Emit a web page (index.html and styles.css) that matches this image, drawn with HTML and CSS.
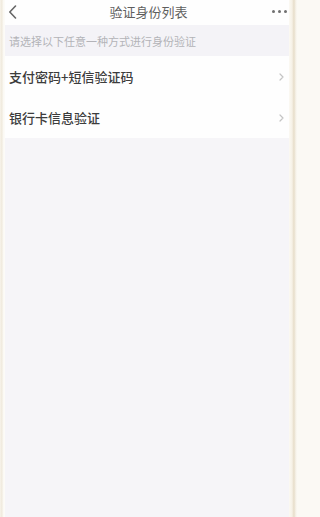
FILE: index.html
```html
<!DOCTYPE html>
<html lang="zh">
<head>
<meta charset="utf-8">
<link rel="stylesheet" href="styles.css">
</head>
<body>
<div class="frame">
  <div class="edge edge-left"></div>
  <div class="screen">
    <header class="nav">
      <svg class="back" width="9" height="14" viewBox="0 0 9 14"><path d="M7.5 1 L1.8 7 L7.5 13" fill="none" stroke="#666" stroke-width="1.6" stroke-linecap="round" stroke-linejoin="round"/></svg>
      <div class="title">验证身份列表</div>
      <div class="more"><span></span><span></span><span></span></div>
    </header>
    <div class="hint">请选择以下任意一种方式进行身份验证</div>
    <ul class="list">
      <li class="row"><span class="label">支付密码+短信验证码</span><svg class="chev" width="5" height="8" viewBox="0 0 5 8"><path d="M1 1 L4 4 L1 7" fill="none" stroke="#c4c4c4" stroke-width="1.2" stroke-linecap="round" stroke-linejoin="round"/></svg></li>
      <li class="row"><span class="label">银行卡信息验证</span><svg class="chev" width="5" height="8" viewBox="0 0 5 8"><path d="M1 1 L4 4 L1 7" fill="none" stroke="#c4c4c4" stroke-width="1.2" stroke-linecap="round" stroke-linejoin="round"/></svg></li>
    </ul>
    <div class="rest"></div>
  </div>
  <div class="edge edge-right"></div>
</div>
</body>
</html>
```
FILE: styles.css
```css
* { box-sizing: border-box; }
html, body { margin: 0; padding: 0; height: 100%; }
body {
  font-family: "Noto Sans CJK SC", "Noto Sans", sans-serif;
  background: #fbf9f4;
}
.frame {
  display: flex;
  height: 517px;
  width: 297px;
}
.edge { flex: none; }
.edge-left {
  width: 5px;
  background: linear-gradient(to right, #f7f3ea 0, #efe9dc 2px, #faf8f2 3px, #fdfcf9 5px);
}
.edge-right {
  width: 8px;
  background: linear-gradient(to right, #fbf9f3 0, #f6f1e6 3px, #e6dcc8 5px, #f1ebde 6px, #fbf9f4 8px);
}
.screen {
  flex: 1;
  display: flex;
  flex-direction: column;
  background: #f6f5f8;
  min-width: 0;
}
.nav {
  height: 25px;
  background: #fefefe;
  display: flex;
  align-items: center;
  justify-content: space-between;
  padding: 0 2px 2px 3px;
}
.back { display: block; }
.title {
  font-size: 13px;
  color: #5e5e5e;
  line-height: 1;
  margin-left: 8px;
}
.more {
  display: flex;
  gap: 3px;
  padding-right: 0;
}
.more span {
  width: 3px;
  height: 3px;
  border-radius: 50%;
  background: #707070;
}
.hint {
  height: 31px;
  display: flex;
  align-items: center;
  padding-left: 4px;
  font-size: 11px;
  color: #b3b3b8;
  background: #f4f3f7;
  letter-spacing: 0;
}
.list {
  list-style: none;
  margin: 0;
  padding: 0;
  background: #fefefe;
}
.row {
  height: 41px;
  display: flex;
  align-items: center;
  justify-content: space-between;
  padding: 0 5px 0 4px;
}
.label {
  font-size: 13px;
  font-weight: 500;
  color: #3c3c3c;
}
.chev { display: block; }
.rest {
  flex: 1;
  background: #f6f5f8;
}
```
